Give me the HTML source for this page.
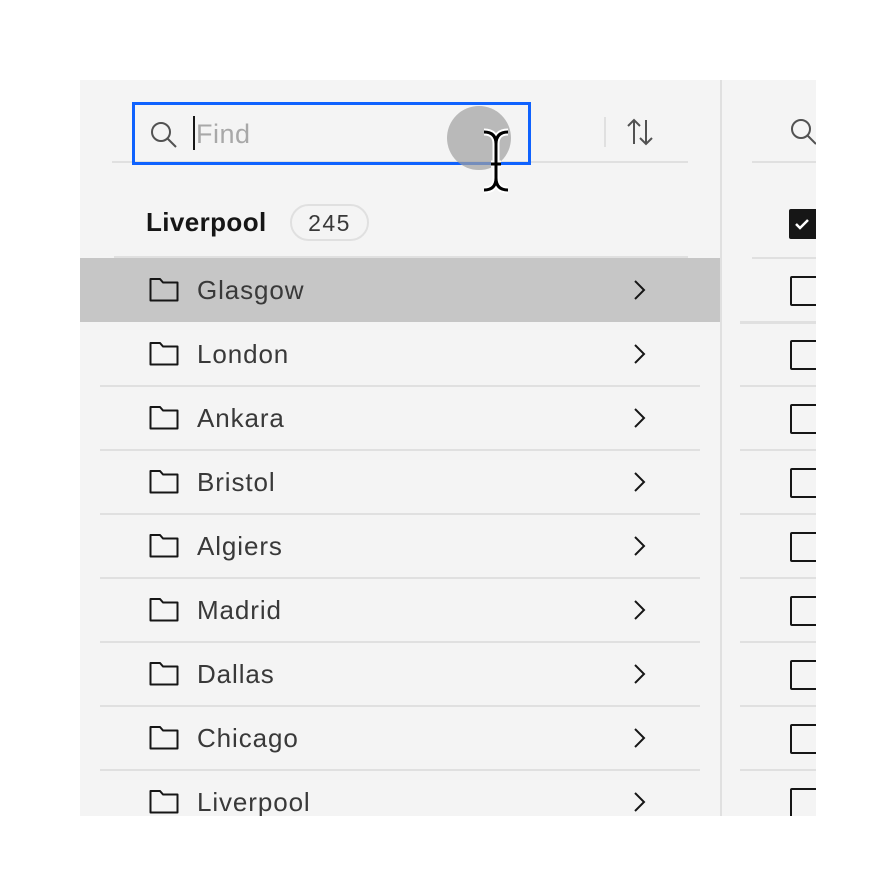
<!DOCTYPE html>
<html><head><style>
body{margin:0;width:896px;height:896px;background:#fff;position:relative;overflow:hidden;font-family:"Liberation Sans",sans-serif}
.a{position:absolute}
#panel{left:80px;top:80px;width:736px;height:736px;background:#f4f4f4;overflow:hidden}
.line{position:absolute;height:2px;background:#e0e0e0}
.row{position:absolute;left:0;width:640px;height:64px}
.row .t{position:absolute;left:117px;top:17px;font-size:26px;color:#393939;letter-spacing:0.9px}
.row svg.f{position:absolute;left:69px;top:19px}
.row svg.c{position:absolute;left:552px;top:21px}
.cb{position:absolute;left:710px;height:30px;border:2px solid #161616;border-radius:2px;box-sizing:border-box;width:40px}
</style></head><body>
<div id="panel" class="a">
  <div class="line" style="left:32px;top:81px;width:576px"></div>
  <div class="a" style="left:52px;top:22px;width:399px;height:63px;border:3px solid #0f62fe;box-sizing:border-box"></div>
  <svg class="a" style="left:68px;top:39px" width="32" height="32" viewBox="0 0 32 32"><circle cx="13" cy="13" r="9" fill="none" stroke="#525252" stroke-width="2"/><line x1="19.5" y1="19.5" x2="28" y2="28" stroke="#525252" stroke-width="2"/></svg>
  <div class="a" style="left:113px;top:36px;width:1.5px;height:34px;background:#161616"></div>
  <div class="a" style="left:116px;top:39px;font-size:27px;color:#a8a8a8;letter-spacing:0.5px">Find</div>
  <div class="a" style="left:524px;top:37px;width:2px;height:30px;background:#e0e0e0"></div>
  <svg class="a" style="left:544px;top:36px" width="32" height="32" viewBox="0 0 32 32" fill="none" stroke="#525252" stroke-width="2"><path d="M10 4V28M4 10L10 4L16 10M22 4V28M16 22L22 28L28 22"/></svg>
  <div class="a" style="left:66px;top:127px;font-size:26px;font-weight:bold;color:#161616;letter-spacing:0.4px">Liverpool</div>
  <div class="a" style="left:210px;top:124px;width:79px;height:37px;border:2px solid #e0e0e0;border-radius:19px;box-sizing:border-box;text-align:center;line-height:34px;font-size:23px;color:#393939;letter-spacing:1.5px">245</div>
  <div class="line" style="left:34px;top:176px;width:574px"></div>
  <div class="a" style="left:0;top:178px;width:640px;height:64px;background:#c6c6c6"></div>
  <div class="a" style="left:640px;top:0;width:2px;height:736px;background:#e0e0e0"></div>
  <div id="rows"></div>
  <svg class="a" style="left:708px;top:36px" width="32" height="32" viewBox="0 0 32 32"><circle cx="13" cy="13" r="9" fill="none" stroke="#525252" stroke-width="2"/><line x1="19.5" y1="19.5" x2="28" y2="28" stroke="#525252" stroke-width="2"/></svg>
  <div class="line" style="left:672px;top:81px;width:80px"></div>
  <div class="a" style="left:709px;top:129px;width:40px;height:30px;background:#161616;border-radius:2px"></div>
  <svg class="a" style="left:712px;top:134px" width="20" height="20" viewBox="0 0 20 20"><path d="M4 10L8 14L16 6" fill="none" stroke="#fff" stroke-width="2.5"/></svg>
  <div class="line" style="left:672px;top:177px;width:80px"></div>
</div>
<script>
var names=["Glasgow","London","Ankara","Bristol","Algiers","Madrid","Dallas","Chicago","Liverpool"];
var h="";
names.forEach(function(n,i){
 var top=178+64*i;
 h+='<div class="row" style="top:'+top+'px"><svg class="f" width="30" height="26" viewBox="0 0 30 26"><path d="M1.5 2H11L14 5.5H28.5V23.5H1.5Z" fill="none" stroke="#161616" stroke-width="2" stroke-linejoin="round"/></svg><div class="t">'+n+'</div><svg class="c" width="16" height="22" viewBox="0 0 16 22"><path d="M3 2L12 11L3 20" fill="none" stroke="#161616" stroke-width="2"/></svg></div>';
 if(i>0) h+='<div class="line" style="left:20px;top:'+(top+63)+'px;width:600px"></div>';
 h+='<div class="cb" style="top:'+(top+18)+'px"></div>';
 if(i>0) h+='<div class="line" style="left:660px;top:'+(top-1)+'px;width:80px"></div>';
});
h+='<div class="line" style="left:660px;top:242px;width:80px"></div>';
document.getElementById("rows").innerHTML=h;
</script>
<div class="a" style="left:447px;top:106px;width:64px;height:64px;border-radius:50%;background:rgba(160,160,160,0.7)"></div>
<svg class="a" style="left:478px;top:126px" width="36" height="74" viewBox="0 0 36 74"><path d="M6 6C14 6 18 10 18 18V52C18 60 14 64 6 64M30 6C22 6 18 10 18 18V52C18 60 22 64 30 64M13 38H23" fill="none" stroke="#fff" stroke-width="7"/><path d="M6 6C14 6 18 10 18 18V52C18 60 14 64 6 64M30 6C22 6 18 10 18 18V52C18 60 22 64 30 64M13 38H23" fill="none" stroke="#000" stroke-width="3"/></svg>
</body></html>
